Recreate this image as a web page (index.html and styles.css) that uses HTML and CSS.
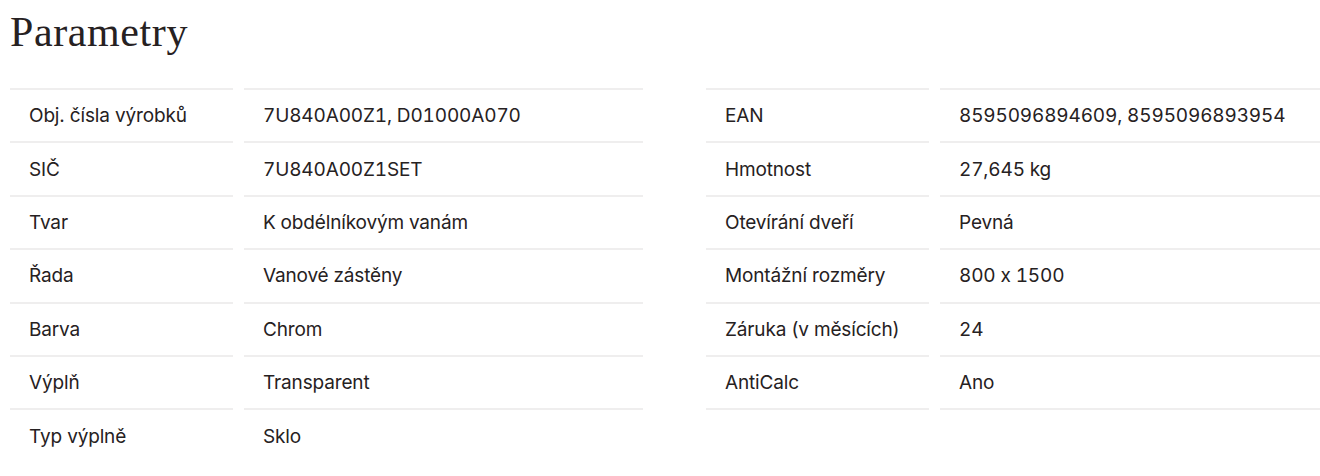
FILE: index.html
```html
<!DOCTYPE html>
<html lang="cs">
<head>
<meta charset="utf-8">
<title>Parametry</title>
<link rel="stylesheet" href="styles.css">
</head>
<body>
<section class="params">
  <h2 class="params-title">Parametry</h2>
  <div class="params-grid">
    <div class="params-col">
      <div class="row"><div class="cell label">Obj. čísla výrobků</div><div class="cell value">7U840A00Z1, D01000A070</div></div>
      <div class="row"><div class="cell label">SIČ</div><div class="cell value">7U840A00Z1SET</div></div>
      <div class="row"><div class="cell label">Tvar</div><div class="cell value">K obdélníkovým vanám</div></div>
      <div class="row"><div class="cell label">Řada</div><div class="cell value">Vanové zástěny</div></div>
      <div class="row"><div class="cell label">Barva</div><div class="cell value">Chrom</div></div>
      <div class="row"><div class="cell label">Výplň</div><div class="cell value">Transparent</div></div>
      <div class="row"><div class="cell label">Typ výplně</div><div class="cell value">Sklo</div></div>
    </div>
    <div class="params-col">
      <div class="row"><div class="cell label">EAN</div><div class="cell value">8595096894609, 8595096893954</div></div>
      <div class="row"><div class="cell label">Hmotnost</div><div class="cell value">27,645 kg</div></div>
      <div class="row"><div class="cell label">Otevírání dveří</div><div class="cell value">Pevná</div></div>
      <div class="row"><div class="cell label">Montážní rozměry</div><div class="cell value">800 x 1500</div></div>
      <div class="row"><div class="cell label">Záruka (v měsících)</div><div class="cell value">24</div></div>
      <div class="row"><div class="cell label">AntiCalc</div><div class="cell value">Ano</div></div>
    </div>
  </div>
</section>
</body>
</html>
```

FILE: styles.css
```css
html, body {
  margin: 0;
  padding: 0;
  background: #ffffff;
}

body {
  font-family: "Inter", "Liberation Sans", sans-serif;
  color: #262122;
  font-feature-settings: "calt" 0;
}

.params {
  padding: 8px 0 0 10px;
}

.params-title {
  font-family: "Liberation Serif", "DejaVu Serif", serif;
  font-weight: 400;
  font-size: 42px;
  line-height: 48px;
  margin: 0 0 32px 0;
  color: #262122;
  letter-spacing: 0.6px;
}

.params-grid {
  display: grid;
  grid-template-columns: 633px 1fr;
  column-gap: 63px;
}

.params-col {
  display: flex;
  flex-direction: column;
}

.row {
  display: flex;
  gap: 11px;
  height: 53.4px;
}

.cell {
  display: flex;
  align-items: center;
  border-top: 2px solid #efeeee;
  font-size: 19px;
  letter-spacing: -0.15px;
  padding-left: 19px;
  box-sizing: border-box;
}

.row:last-child .cell {
  border-bottom: 2px solid #efeeee;
  height: 55.4px;
}

.label {
  width: 223px;
  flex: none;
}

.value {
  flex: 1;
  font-variant-numeric: tabular-nums;
}
```
